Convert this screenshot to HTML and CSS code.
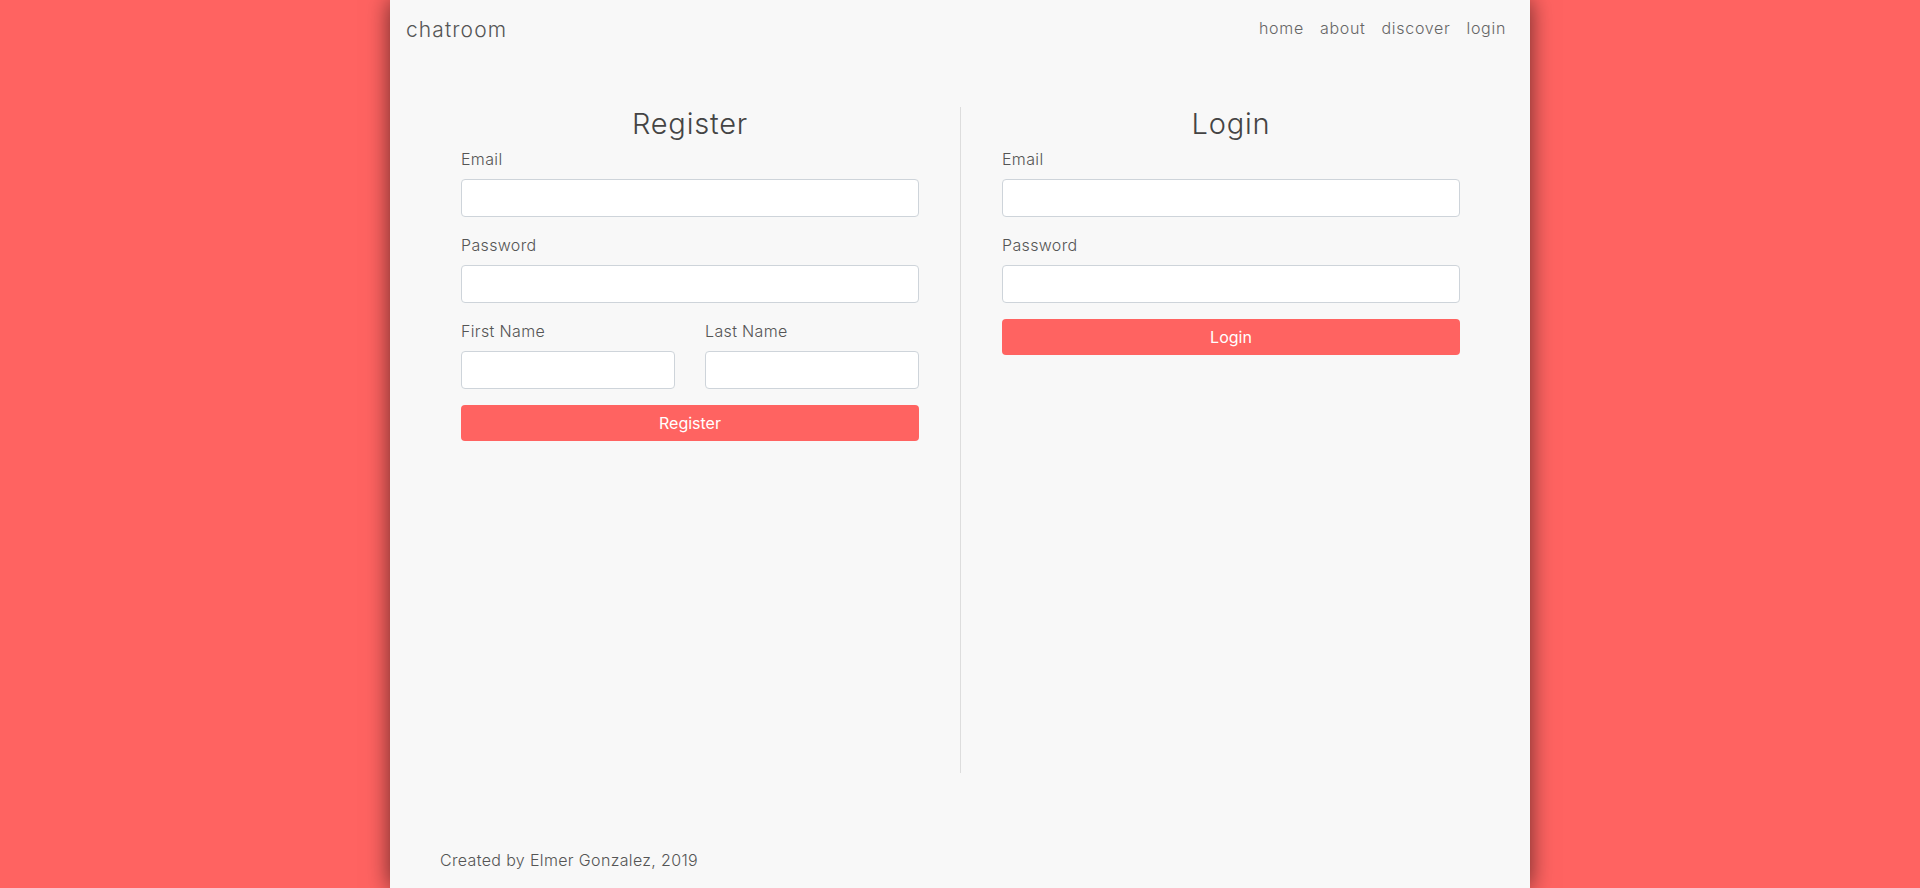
FILE: index.html
```html
<!DOCTYPE html>
<html lang="en">
<head>
<meta charset="utf-8">
<title>chatroom</title>
<link rel="stylesheet" href="styles.css">
</head>
<body>
<div class="page">
  <nav class="navbar">
    <a class="brand" href="#">chatroom</a>
    <ul class="nav-links">
      <li><a href="#">home</a></li>
      <li><a href="#">about</a></li>
      <li><a href="#">discover</a></li>
      <li><a href="#">login</a></li>
    </ul>
  </nav>
  <main class="main">
    <section class="col col-register">
      <h3 class="col-title">Register</h3>
      <form class="form">
        <div class="form-group">
          <label class="label">Email</label>
          <input class="input" type="email">
        </div>
        <div class="form-group">
          <label class="label">Password</label>
          <input class="input" type="password">
        </div>
        <div class="form-row">
          <div class="form-group">
            <label class="label">First Name</label>
            <input class="input" type="text">
          </div>
          <div class="form-group">
            <label class="label">Last Name</label>
            <input class="input" type="text">
          </div>
        </div>
        <button class="btn" type="button">Register</button>
      </form>
    </section>
    <section class="col col-login">
      <h3 class="col-title">Login</h3>
      <form class="form">
        <div class="form-group">
          <label class="label">Email</label>
          <input class="input" type="email">
        </div>
        <div class="form-group">
          <label class="label">Password</label>
          <input class="input" type="password">
        </div>
        <button class="btn" type="button">Login</button>
      </form>
    </section>
  </main>
  <footer class="footer">Created by Elmer Gonzalez, 2019</footer>
</div>
</body>
</html>
```
FILE: styles.css
```css
* { box-sizing: border-box; }
html, body { margin: 0; padding: 0; }
body {
  background: #ff6361;
  font-family: "Inter", "Noto Sans", sans-serif;
  color: #555;
  font-size: 16px;
  line-height: 24px;
  letter-spacing: 0.35px;
}
.page {
  width: 1140px;
  margin: 0 auto;
  min-height: 100vh;
  background: #f8f8f8;
  box-shadow: 0 0 22px rgba(0, 0, 0, 0.6);
}
.navbar {
  display: flex;
  justify-content: space-between;
  align-items: flex-start;
  padding: 8px 16px;
}
.brand {
  font-size: 21px;
  line-height: 30px;
  padding: 7px 0 3px;
  color: #555;
  text-decoration: none;
  letter-spacing: 1.1px;
  font-weight: 300;
}
.nav-links {
  display: flex;
  list-style: none;
  margin: 0;
  padding: 0;
}
.nav-links a {
  display: block;
  padding: 8px;
  color: #666;
  text-decoration: none;
  font-size: 16px;
  line-height: 24px;
  letter-spacing: 0.7px;
  font-weight: 300;
}
.main {
  display: grid;
  grid-template-columns: 570px 570px;
  padding-top: 51px;
}
.col {
  min-height: 666px;
}
.col-register {
  padding: 0 41px 0 71px;
}
.col-login {
  border-left: 1px solid #ddd;
  padding: 0 70px 0 41px;
}
.col-title {
  margin: 0 0 6px;
  font-size: 29px;
  line-height: 33.6px;
  font-weight: 300;
  color: #444;
  text-align: center;
  letter-spacing: 0.8px;
}
.form-group {
  margin-bottom: 16px;
}
.form-row {
  display: grid;
  grid-template-columns: 1fr 1fr;
  column-gap: 30px;
}
.label {
  display: block;
  margin-bottom: 8px;
  color: #555;
  font-weight: 300;
}
.input {
  display: block;
  width: 100%;
  height: 38px;
  border: 1px solid #ced4da;
  border-radius: 4px;
  background: #fff;
  font: inherit;
  padding: 6px 12px;
}
.btn {
  display: block;
  width: 100%;
  height: 36px;
  border: 0;
  border-radius: 4px;
  background: #ff6361;
  color: #fff;
  font: inherit;
  cursor: pointer;
}
.footer {
  padding: 75px 50px 0;
  color: #555;
  font-weight: 300;
}
```
